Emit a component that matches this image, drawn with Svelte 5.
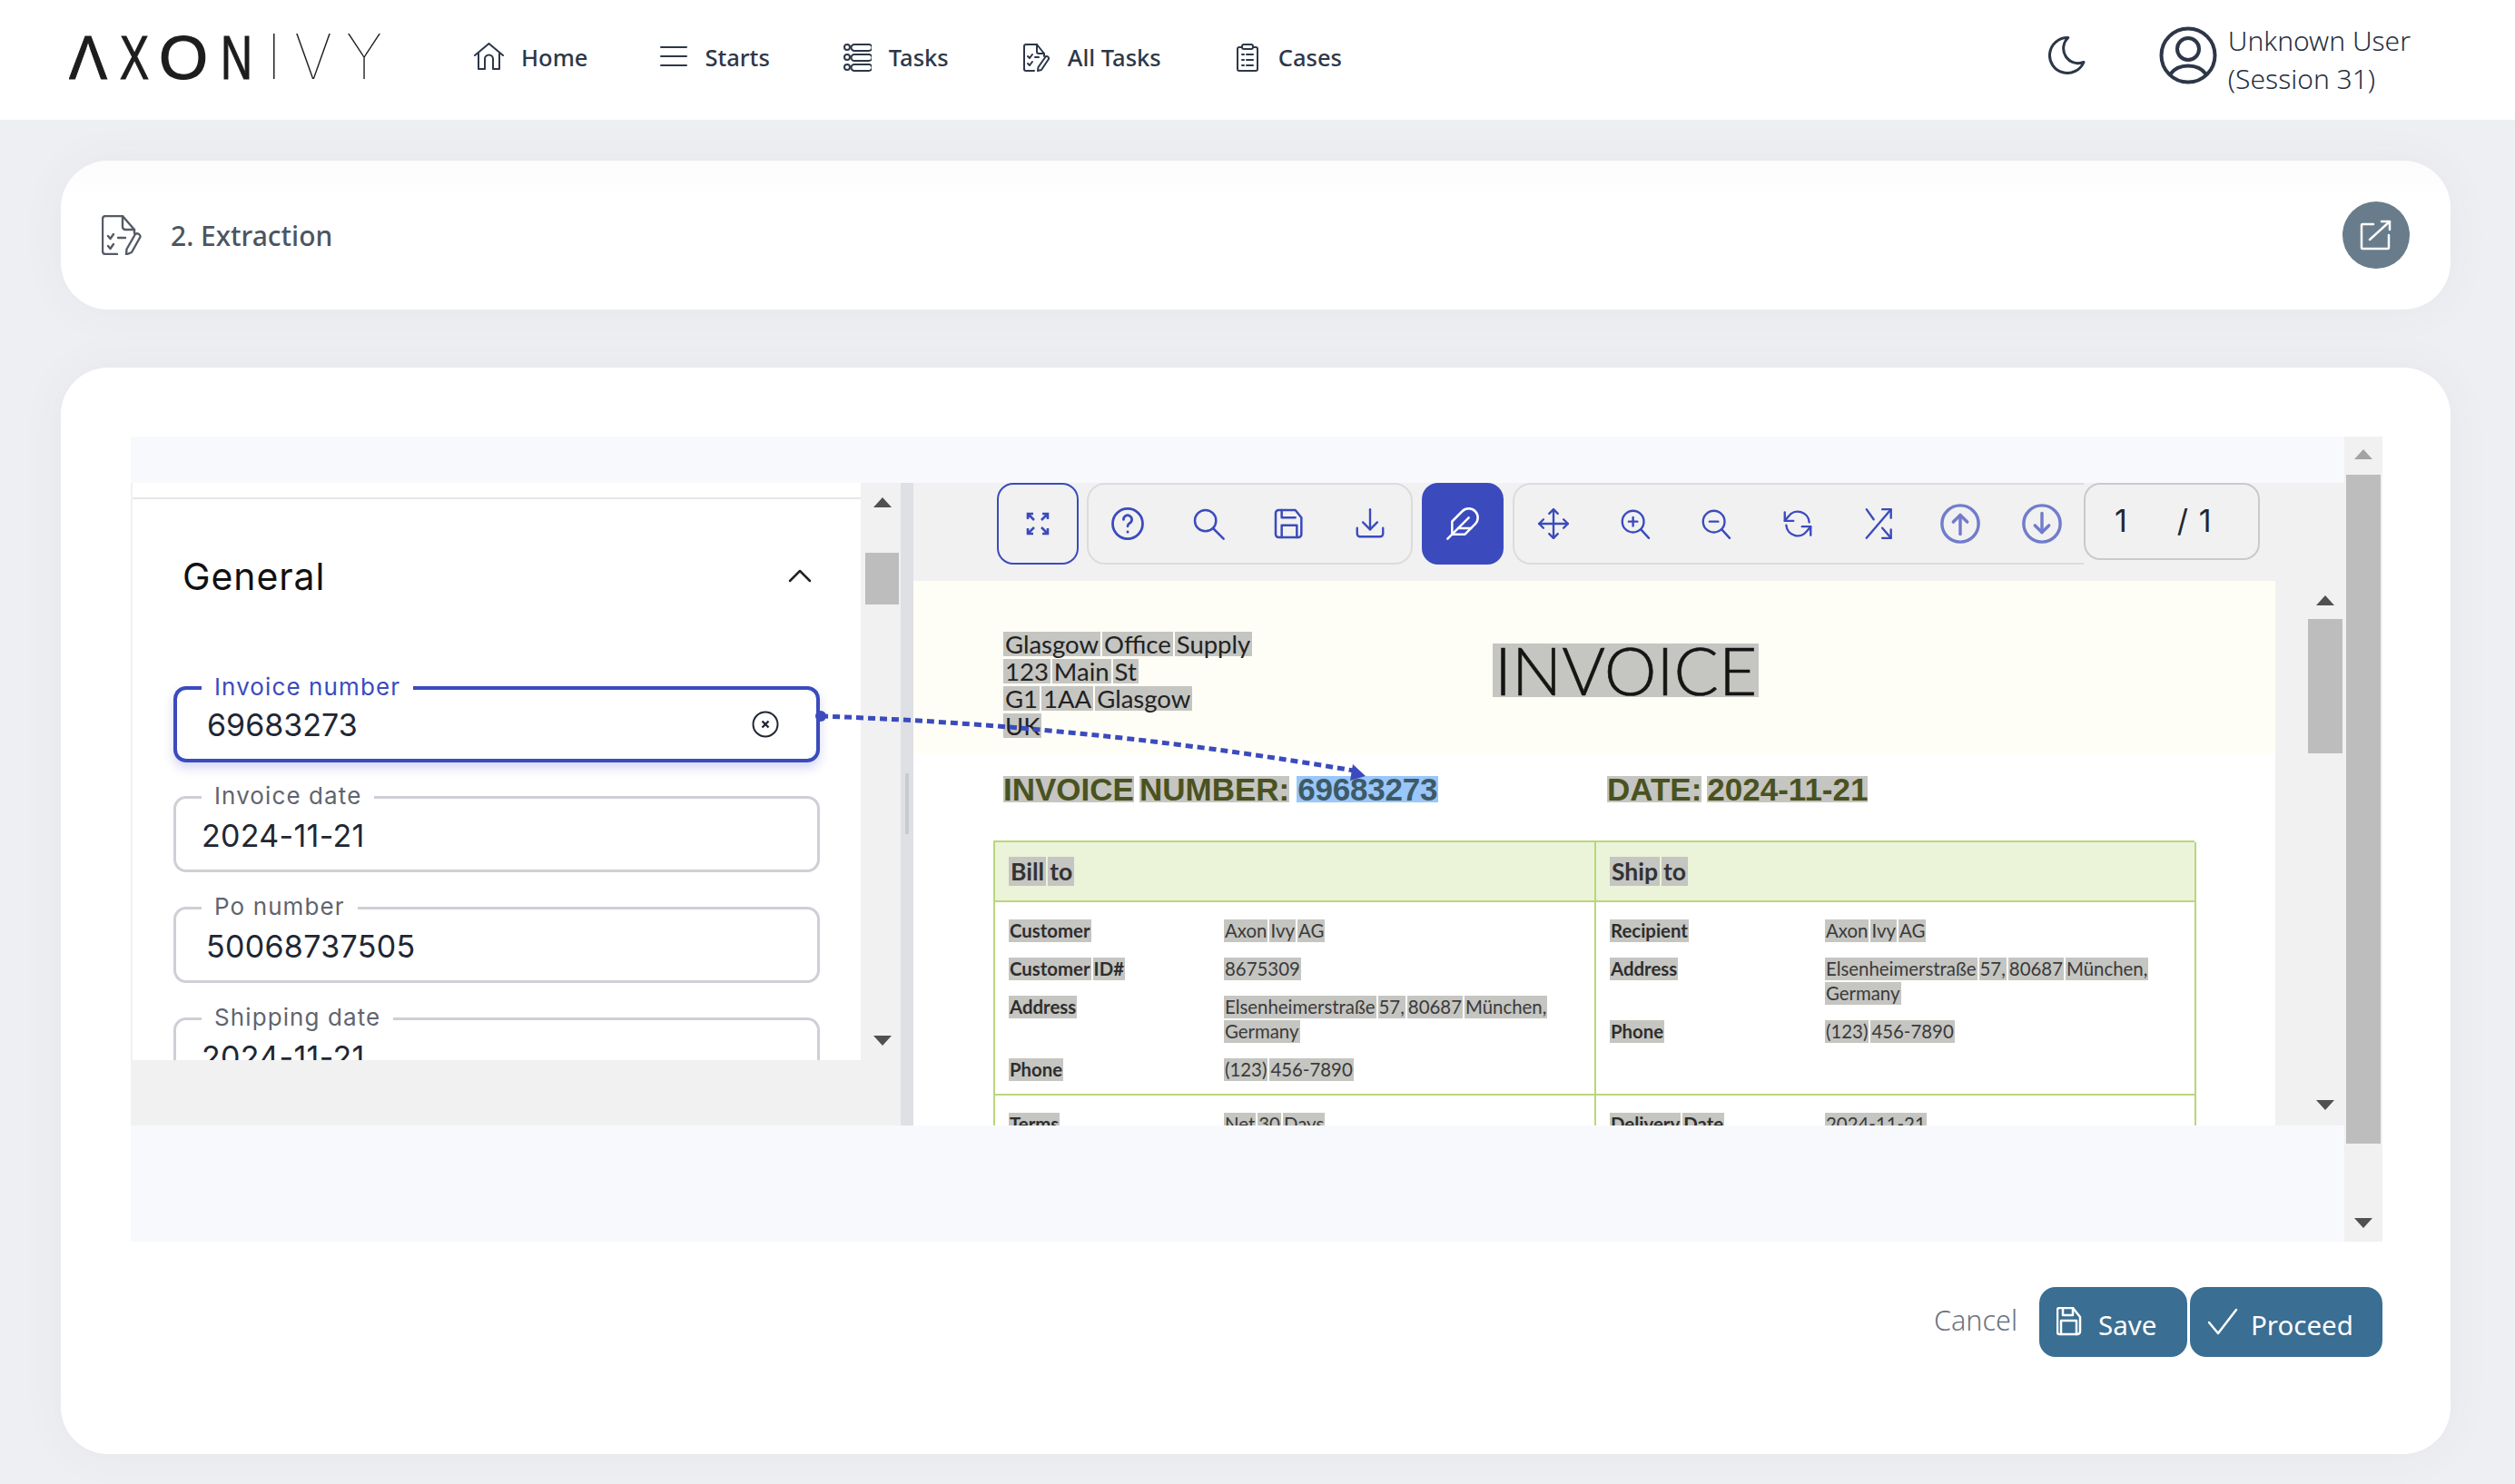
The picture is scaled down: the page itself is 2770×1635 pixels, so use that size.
<script>
  const navItems = [
    { label: "Home", paths: ["M1 14 16.5 1 32 14", "M5 12v17h7V18a4.5 4.5 0 0 1 9 0v11h7V12"], w: 33 },
    { label: "Starts", paths: ["M1 5h28", "M1 15h28", "M1 25h28"], w: 30 },
    {
      label: "Tasks",
      paths: [
        "M2 5a3 3 0 1 0 6 0a3 3 0 1 0-6 0", "M13 2h16a2 2 0 0 1 0 7H13a2 2 0 0 1 0-7z",
        "M2 16a3 3 0 1 0 6 0a3 3 0 1 0-6 0", "M13 13h16a2 2 0 0 1 0 7H13a2 2 0 0 1 0-7z",
        "M2 27a3 3 0 1 0 6 0a3 3 0 1 0-6 0", "M13 24h16a2 2 0 0 1 0 7H13a2 2 0 0 1 0-7z",
      ],
      w: 32,
    },
    {
      label: "All Tasks",
      paths: [
        "M17 2H5a2 2 0 0 0-2 2v25a2 2 0 0 0 2 2h9", "M17 2l8 10h-6a2 2 0 0 1-2-2z", "M25 12v3",
        "M7 15l2 2 3-4", "M7 23l2 2 3-4", "M15 16h4", "M27 15a2.5 2.5 0 0 1 3 3l-8 12-4 1 .5-4z",
      ],
      w: 32,
    },
    {
      label: "Cases",
      paths: [
        "M9 5H6a2 2 0 0 0-2 2v22a2 2 0 0 0 2 2h18a2 2 0 0 0 2-2V7a2 2 0 0 0-2-2h-3",
        "M11 2h8a2 2 0 0 1 2 2v1a2 2 0 0 1-2 2h-8a2 2 0 0 1-2-2V4a2 2 0 0 1 2-2z",
        "M9 13h2", "M14 13h7", "M9 19h2", "M14 19h7", "M9 25h2", "M14 25h7",
      ],
      w: 30,
    },
  ];

  const fileTools = [
    { name: "help", paths: ["M3 12a9 9 0 1 0 18 0a9 9 0 1 0-18 0", "M9.5 9.5a2.5 2.5 0 1 1 3.8 2.1c-.8.5-1.3 1-1.3 1.9", "M12 16.8v.2"], size: 44 },
    { name: "search", paths: ["M3 10a7 7 0 1 0 14 0a7 7 0 1 0-14 0", "M15 15l7 7"], size: 40 },
    { name: "save", paths: ["M5 3h11l4 5v11a2 2 0 0 1-2 2H5a2 2 0 0 1-2-2V5a2 2 0 0 1 2-2z", "M7 3v5h9", "M7 21v-8h10v8"], size: 40 },
    { name: "download", paths: ["M3 15v4a2 2 0 0 0 2 2h14a2 2 0 0 0 2-2v-4", "M12 2v14", "M7 11l5 5 5-5"], size: 38 },
  ];

  const viewTools = [
    { name: "move", paths: ["M12 2v20", "M2 12h20", "M9 5l3-3 3 3", "M9 19l3 3 3-3", "M5 9l-3 3 3 3", "M19 9l3 3-3 3"], size: 38 },
    { name: "zoom in", paths: ["M3 10.5a7.5 7.5 0 1 0 15 0a7.5 7.5 0 1 0-15 0", "M16 16l5.5 6", "M7.5 10.5h6", "M10.5 7.5v6"], size: 38 },
    { name: "zoom out", paths: ["M3 10.5a7.5 7.5 0 1 0 15 0a7.5 7.5 0 1 0-15 0", "M16 16l5.5 6", "M7.5 10.5h6"], size: 38 },
    { name: "rotate", paths: ["M20 11a8 8 0 0 0-14.5-4L3 10", "M3 4v6h6", "M4 13a8 8 0 0 0 14.5 4l2.500-3", "M21 20v-6h-6"], size: 38 },
    { name: "shuffle", paths: ["M3 22L20 2", "M14 2h6v6", "M3 2l5 7", "M14 15l6 7", "M14 22h6v-6"], size: 38 },
  ];

  const pageTools = [
    { name: "previous", paths: ["M1.500 12a10.500 10.500 0 1 0 21 0a10.500 10.500 0 1 0-21 0", "M12 18V7", "M8 11l4-4 4 4"] },
    { name: "next", paths: ["M1.500 12a10.500 10.500 0 1 0 21 0a10.500 10.500 0 1 0-21 0", "M12 6v11", "M8 13l4 4 4-4"] },
  ];

  const fields = [
    { label: "Invoice date", value: "2024-11-21", date: true },
    { label: "Po number", value: "50068737505" },
    { label: "Shipping date", value: "2024-11-21", date: true },
  ];

  const billRows = [
    ["Customer", ["Axon Ivy AG"]],
    ["Customer ID#", ["8675309"]],
    ["Address", ["Elsenheimerstraße 57, 80687 München,", "Germany"]],
    ["Phone", ["(123) 456-7890"]],
  ];
  const shipRows = [
    ["Recipient", ["Axon Ivy AG"]],
    ["Address", ["Elsenheimerstraße 57, 80687 München,", "Germany"]],
    ["Phone", ["(123) 456-7890"]],
  ];
</script>

{#snippet icon(paths, w, h = w, box = `0 0 ${w} ${h}`, cls = "")}
  <svg class={cls} width={w} height={h} viewBox={box} fill="none" stroke="currentColor" stroke-linecap="round" stroke-linejoin="round" aria-hidden="true">
    {#each paths as d}<path {d} />{/each}
  </svg>
{/snippet}

{#snippet words(text)}
  {#each text.split(" ") as word}<span class="word">{word}</span>{/each}
{/snippet}

{#snippet rows(list)}
  <div class="rows">
    {#each list as [label, lines]}
      <div class="row-label">{@render words(label)}</div>
      <div class="row-value">
        {#each lines as line}<div>{@render words(line)}</div>{/each}
      </div>
    {/each}
  </div>
{/snippet}

<div class="page">
  <header class="topbar">
    <svg class="logo" width="345" height="70" viewBox="0 0 345 70" role="img" aria-label="Axon Ivy">
      <text x="0" y="50" textLength="42" lengthAdjust="spacingAndGlyphs" class="logo-bold">Λ</text>
      <text x="56" y="50" textLength="32" lengthAdjust="spacingAndGlyphs" class="logo-bold">X</text>
      <text x="99" y="50" textLength="54" lengthAdjust="spacingAndGlyphs" class="logo-bold">O</text>
      <text x="167" y="50" textLength="35" lengthAdjust="spacingAndGlyphs" class="logo-bold">N</text>
      <rect x="225" y="0" width="1.500" height="50" fill="#222" />
      <text x="248" y="50" textLength="42" lengthAdjust="spacingAndGlyphs" class="logo-thin">V</text>
      <text x="305" y="50" textLength="40" lengthAdjust="spacingAndGlyphs" class="logo-thin">Y</text>
    </svg>

    <nav class="nav">
      {#each navItems as item}
        <a class="nav-item" href="#top">
          {@render icon(item.paths, item.w, 32)}
          <span>{item.label}</span>
        </a>
      {/each}
    </nav>

    <div class="user-area">
      <svg class="moon" width="52" height="52" viewBox="0 0 24 24" fill="none" stroke="currentColor" stroke-width="1.400" stroke-linejoin="round" aria-hidden="true">
        <path d="M12 3c.132 0 .263 0 .393 0a7.500 7.500 0 0 0 7.920 12.446a9 9 0 1 1-8.313-12.454z" />
      </svg>
      <div class="user">
        <svg width="64" height="64" viewBox="0 0 64 64" fill="none" stroke="currentColor" stroke-width="4" aria-hidden="true">
          <circle cx="32" cy="32" r="29.500" />
          <circle cx="32" cy="25" r="12" />
          <path d="M12 53c5-7 12-9.500 20-9.500s15 2.500 20 9.500" />
        </svg>
        <div class="user-name">Unknown User<br />(Session 31)</div>
      </div>
    </div>
  </header>

  <main class="content">
    <section class="card title-card">
      <svg class="title-icon" width="44" height="44" viewBox="0 0 44 44" fill="none" stroke="currentColor" stroke-width="2.400" stroke-linecap="round" stroke-linejoin="round" aria-hidden="true">
        <path d="M23 1H4a3 3 0 0 0-3 3v36a3 3 0 0 0 3 3h13" />
        <path d="M23 1l13 15H26a3 3 0 0 1-3-3z" />
        <path d="M36 16v4" />
        <path d="M7 23l2.500 3 3.500-5" />
        <path d="M7 34l2.500 3 3.500-5" />
        <path d="M18 25h8" />
        <path d="M37 21a3.500 3.500 0 0 1 5.500 3L33 41l-6 2.500.5-6z" />
      </svg>
      <h1>2. Extraction</h1>
      <button class="open-button" aria-label="Open in new tab">
        {@render icon(["M15 5H3a1 1 0 0 0-1 1v25a1 1 0 0 0 1 1h28a1 1 0 0 0 1-1V17", "M11 22L33 2", "M24 2h9v9"], 36, 34)}
      </button>
    </section>

    <section class="card task-card">
      <div class="frame">
        <div class="frame-main">
          <div class="frame-strip"></div>
          <div class="workspace">
            <div class="form-column">
              <div class="form-pane">
                <div class="form-scroll">
                  <div class="form-head">
                    <h2>General</h2>
                    {@render icon(["M2 13L13 2l11 11"], 26, 15, "0 0 26 15", "chevron")}
                  </div>

                  <div class="field focused">
                    <span class="field-label">Invoice number</span>
                    <span class="field-value">69683273</span>
                    <svg class="clear" width="30" height="30" viewBox="0 0 30 30" fill="none" stroke="currentColor" stroke-width="2" aria-hidden="true">
                      <circle cx="15" cy="15" r="13.500" />
                      <path d="M11.500 11.500l7 7M18.500 11.500l-7 7" stroke-width="2.400" />
                    </svg>
                  </div>

                  {#each fields as field}
                    <div class="field">
                      <span class="field-label">{field.label}</span>
                      <span class="field-value" class:date={field.date}>{field.value}</span>
                    </div>
                  {/each}
                </div>
                <div class="scrollbar form-bar">
                  <span class="arrow up"></span>
                  <span class="thumb"></span>
                  <span class="arrow down"></span>
                </div>
              </div>
            </div>

            <div class="splitter"><span></span></div>

            <div class="viewer">
              <div class="toolbar">
                <button class="tool-single" aria-label="Fullscreen">
                  <svg class="expand" width="26" height="26" viewBox="0 0 26 26" fill="none" stroke="currentColor" aria-hidden="true">
                    <path d="M9 9L2 2M2 8V2h6M17 9l7-7M18 2h6v6M9 17l-7 7M2 18v6h6M17 17l7 7M24 18v6h-6" />
                  </svg>
                </button>

                <div class="tool-group file-group">
                  {#each fileTools as t}
                    <span class="tool" title={t.name}>{@render icon(t.paths, t.size, t.size, "0 0 24 24")}</span>
                  {/each}
                </div>

                <button class="tool-active" aria-label="Annotate">
                  {@render icon(["M20.240 12.240a6 6 0 0 0-8.490-8.490L5 10.500V19h8.500z", "M16 8L2 22", "M17.500 15H9"], 40, 40, "0 0 24 24")}
                </button>

                <div class="tool-group view-group">
                  {#each viewTools as t}
                    <span class="tool" title={t.name}>{@render icon(t.paths, t.size, t.size, "0 0 24 24")}</span>
                  {/each}
                  {#each pageTools as t}
                    <span class="tool faded" title={t.name}>{@render icon(t.paths, 46, 46, "0 0 24 24")}</span>
                  {/each}
                </div>

                <div class="page-box">
                  <span class="page-current">1</span>
                  <span class="page-total">/ 1</span>
                </div>
              </div>

              <div class="doc-area">
                <div class="doc">
                  <div class="doc-band">
                    <div class="address">
                      <div>{@render words("Glasgow Office Supply")}</div>
                      <div>{@render words("123 Main St")}</div>
                      <div>{@render words("G1 1AA Glasgow")}</div>
                      <div>{@render words("UK")}</div>
                    </div>
                    <div class="doc-title"><span class="word">INVOICE</span></div>
                  </div>

                  <div class="doc-meta">
                    <div class="meta-number">
                      {@render words("INVOICE NUMBER:")}<span class="word picked">69683273</span>
                    </div>
                    <div class="meta-date">{@render words("DATE: 2024-11-21")}</div>
                  </div>

                  <div class="doc-table">
                    <div class="cell head">{@render words("Bill to")}</div>
                    <div class="cell head">{@render words("Ship to")}</div>
                    <div class="cell body">{@render rows(billRows)}</div>
                    <div class="cell body">{@render rows(shipRows)}</div>
                    <div class="cell body">{@render rows([["Terms", ["Net 30 Days"]]])}</div>
                    <div class="cell body">{@render rows([["Delivery Date", ["2024-11-21"]]])}</div>
                  </div>
                </div>

                <div class="doc-gutter"></div>

                <div class="scrollbar doc-bar">
                  <span class="arrow up"></span>
                  <span class="thumb"></span>
                  <span class="arrow down"></span>
                </div>
              </div>
            </div>
          </div>
          <div class="frame-strip bottom"></div>
        </div>

        <div class="scrollbar frame-bar">
          <span class="arrow up pale"></span>
          <span class="thumb"></span>
          <span class="arrow down"></span>
        </div>
      </div>

      <div class="actions">
        <a class="cancel" href="#top">Cancel</a>
        <button class="action save">
          {@render icon(["M3 1h15l8 10v16a3 3 0 0 1-3 3H3a2 2 0 0 1-2-2V3a2 2 0 0 1 2-2z", "M7 1v8h11V1", "M5 30V15h17v15"], 28, 32, "0 0 28 32")}
          Save
        </button>
        <button class="action proceed">
          {@render icon(["M2 16l10 12L32 2"], 34, 30, "0 0 34 30")}
          Proceed
        </button>
      </div>
    </section>
  </main>

  <!-- connector from the focused field to the value picked in the document -->
  <svg class="connector" width="2770" height="1635" viewBox="0 0 2770 1635" fill="none" aria-hidden="true">
    <circle cx="904" cy="789" r="6" fill="#3b4bbd" />
    <path d="M904 789C1130 797 1320 820 1491 849" stroke="#3b4bbd" stroke-width="5" stroke-dasharray="8 5" />
    <path d="M1490 842l14 13-17 5z" fill="#3b4bbd" />
  </svg>
</div>

<style>
  :global(body) {
    margin: 0;
    background: #eeeff2;
  }

  .page {
    position: relative;
    width: 100%;
    height: 1635px;
    overflow: hidden;
    font-family: "Noto Sans", "Open Sans", sans-serif;
    color: #2d3748;
  }

  .topbar {
    display: flex;
    align-items: center;
    height: 132px;
    padding: 0 115px 6px 76px;
    box-sizing: border-box;
    background: #fff;
  }

  .logo {
    flex: none;
    align-self: flex-start;
    margin-top: 37px;
  }

  .logo text {
    font-family: "Liberation Sans", sans-serif;
    font-size: 69px;
    fill: #1d1d1d;
  }

  .logo .logo-bold {
    stroke: #1d1d1d;
    stroke-width: 1.2px;
  }

  .logo .logo-thin {
    font-family: Inter, sans-serif;
    font-weight: 100;
  }

  .nav {
    display: flex;
    align-items: center;
    gap: 80px;
    margin-left: 101px;
  }

  .nav-item {
    display: flex;
    align-items: center;
    gap: 19px;
    font-size: 25.5px;
    font-weight: 500;
    color: #2d3748;
    text-decoration: none;
  }

  .nav-item svg {
    stroke-width: 2;
  }

  .user-area {
    display: flex;
    align-items: center;
    margin: 0 0 4px auto;
  }

  .moon {
    margin-right: 75px;
  }

  .user {
    display: flex;
    align-items: center;
    gap: 12px;
  }

  .user-name {
    margin-top: 10px;
    font-size: 30px;
    font-weight: 300;
    line-height: 42px;
    white-space: nowrap;
    color: #263040;
  }

  .content {
    padding: 45px 71px 0 67px;
  }

  .card {
    background: #fff;
    border-radius: 52px;
    box-shadow: 0 0 50px rgba(70, 75, 100, 0.05);
  }

  .title-card {
    display: flex;
    align-items: center;
    height: 164px;
    padding: 0 45px;
    box-sizing: border-box;
    background: linear-gradient(#fcfcfc, #fff 30%);
  }

  .title-icon {
    color: #555b66;
  }

  .title-card h1 {
    margin: 0 0 0 32px;
    font-size: 30px;
    font-weight: 500;
    color: #4b5563;
  }

  .open-button {
    display: flex;
    align-items: center;
    justify-content: center;
    width: 74px;
    height: 74px;
    margin-left: auto;
    padding: 0;
    border: none;
    border-radius: 50%;
    background: #687c8b;
    color: #fff;
  }

  .open-button svg {
    stroke-width: 2.500;
  }

  .task-card {
    height: 1197px;
    margin-top: 64px;
    padding: 76px 75px 0 77px;
    box-sizing: border-box;
  }

  .frame {
    display: flex;
    height: 887px;
  }

  .frame-main {
    flex: 1;
    display: flex;
    flex-direction: column;
    min-width: 0;
  }

  .frame-strip {
    flex: none;
    height: 51px;
    background: #f8f9fc;
  }

  .frame-strip.bottom {
    height: 128px;
  }

  .workspace {
    flex: none;
    display: flex;
    height: 708px;
  }

  .form-column {
    flex: none;
    width: 848px;
    box-sizing: border-box;
    padding-left: 2px;
    background: #f1f1f1;
  }

  .form-pane {
    display: flex;
    height: 636px;
    overflow: hidden;
  }

  .form-scroll {
    flex: 1;
    min-width: 0;
    background: #fff;
    position: relative;
    padding: 17px 45px 0 45px;
    box-sizing: border-box;
    font-family: Inter, sans-serif;
  }

  .form-scroll::before {
    content: "";
    position: absolute;
    top: 16px;
    left: 0;
    right: 0;
    height: 2px;
    background: #e6e6e6;
  }

  .form-head {
    display: flex;
    align-items: center;
    justify-content: space-between;
    height: 168px;
    padding: 0 9px 0 10px;
    box-sizing: border-box;
    margin-bottom: 39px;
  }

  .form-head h2 {
    margin: 3px 0 0;
    font-size: 41px;
    font-weight: 400;
    letter-spacing: 0.9px;
    color: #111;
  }

  .chevron {
    stroke-width: 2.500;
    color: #222;
    margin-top: 3px;
  }

  .field {
    position: relative;
    display: flex;
    align-items: center;
    height: 84px;
    margin-bottom: 38px;
    padding-top: 2px;
    box-sizing: border-box;
    border: 3px solid #cfcfd6;
    border-radius: 14px;
  }

  .field.focused {
    border: 4px solid #3b4bbd;
    box-shadow: 0 6px 12px rgba(59, 75, 189, 0.22);
    margin-bottom: 37px;
    padding-top: 1px;
  }

  .field-label {
    position: absolute;
    top: -16px;
    left: 28px;
    padding: 0 14px;
    background: #fff;
    font-size: 26px;
    line-height: 26px;
    letter-spacing: 1.1px;
    color: #5f6570;
    white-space: nowrap;
  }

  .focused .field-label {
    color: #3b4bbd;
    top: -16px;
    left: 27px;
  }

  .field-value {
    margin-left: 33px;
    font-size: 34px;
    letter-spacing: 0.3px;
    color: #1f2733;
  }

  .field-value.date {
    margin-left: 28px;
  }

  .focused .field-value {
    margin-left: 33px;
    letter-spacing: 0;
  }

  .clear {
    position: absolute;
    right: 41px;
    top: 23px;
    color: #1f2733;
  }

  .scrollbar {
    flex: none;
    position: relative;
    background: #f1f1f1;
  }

  .arrow {
    position: absolute;
    left: 50%;
    width: 0;
    height: 0;
    margin-left: -10px;
    border-left: 10px solid transparent;
    border-right: 10px solid transparent;
  }

  .arrow.up {
    border-bottom: 11px solid #505050;
  }

  .arrow.up.pale {
    border-bottom-color: #a3a3a3;
  }

  .arrow.down {
    border-top: 11px solid #505050;
  }

  .thumb {
    position: absolute;
    left: 2px;
    right: 2px;
    background: #bdbdbd;
  }

  .form-bar {
    width: 44px;
  }

  .form-bar .arrow {
    margin-left: -8px;
  }

  .form-bar .up {
    top: 16px;
  }

  .form-bar .thumb {
    top: 77px;
    height: 57px;
    left: 5px;
  }

  .form-bar .down {
    top: 609px;
  }

  .splitter {
    flex: none;
    position: relative;
    width: 14px;
    background: #dee0e5;
  }

  .splitter span {
    position: absolute;
    top: 320px;
    left: 5px;
    width: 4px;
    height: 67px;
    background: #c8cbd0;
  }

  .viewer {
    flex: 1;
    min-width: 0;
    display: flex;
    flex-direction: column;
    background: #f1f1f1;
  }

  .toolbar {
    position: relative;
    display: flex;
    flex: none;
    align-items: flex-start;
    height: 108px;
    padding-left: 92px;
    box-sizing: border-box;
    color: #3b4bbd;
  }

  .toolbar svg {
    stroke-width: 1.500;
  }

  .toolbar .expand {
    stroke-width: 2.600;
  }

  .tool-single,
  .tool-active {
    display: flex;
    align-items: center;
    justify-content: center;
    width: 90px;
    height: 90px;
    padding: 0;
    border-radius: 18px;
    box-sizing: border-box;
  }

  .tool-single {
    border: 2px solid #3b4bbd;
    background: transparent;
    color: #3b4bbd;
  }

  .tool-active {
    margin-left: 10px;
    border: none;
    background: #3b4bbd;
    color: #fff;
  }

  .tool-group {
    display: flex;
    align-items: center;
    height: 90px;
    box-sizing: border-box;
    border: 2px solid #dcdcdc;
    border-radius: 20px;
  }

  .tool-group .tool {
    flex: none;
    display: flex;
    align-items: center;
    justify-content: center;
  }

  .file-group {
    width: 359px;
    margin-left: 9px;
  }

  .file-group .tool {
    width: 89px;
  }

  .file-group .tool:first-child {
    margin-left: -2px;
  }

  .view-group {
    width: 629px;
    margin-left: 10px;
    border-right: none;
    border-radius: 20px 0 0 20px;
  }

  .view-group .tool {
    width: 89.7px;
  }

  .view-group .tool:first-child {
    margin-left: -2px;
  }

  .toolbar .faded {
    opacity: 0.7;
  }

  .toolbar .faded svg {
    stroke-width: 1.800;
  }

  .page-box {
    display: flex;
    align-items: center;
    width: 194px;
    height: 85px;
    box-sizing: border-box;
    border: 2px solid #cacaca;
    border-radius: 18px;
    font-family: Inter, sans-serif;
    font-size: 34px;
    color: #1f2733;
    padding: 0 0 3px 32px;
  }

  .page-total {
    margin-left: 55px;
    word-spacing: 2px;
  }

  .doc-area {
    flex: 1;
    min-height: 0;
    display: flex;
  }

  .doc {
    flex: none;
    width: 1500px;
    overflow: hidden;
    background: #fff;
  }

  .doc-gutter {
    flex: none;
    width: 34px;
  }

  .doc-bar {
    width: 42px;
    height: 600px;
  }

  .doc-bar .up {
    top: 16px;
  }

  .doc-bar .thumb {
    top: 42px;
    height: 148px;
  }

  .doc-bar .down {
    top: 572px;
  }

  .frame-bar {
    width: 42px;
  }

  .frame-bar .up {
    top: 14px;
  }

  .frame-bar .thumb {
    top: 42px;
    height: 737px;
  }

  .frame-bar .down {
    top: 861px;
  }

  .word {
    display: inline-block;
    padding: 0 2px;
    background: #c5c5c1;
  }

  .doc-band {
    display: flex;
    height: 190px;
    padding-left: 99px;
    box-sizing: border-box;
    background: #fffef6;
  }

  .address {
    width: 539px;
    padding-top: 55px;
    box-sizing: border-box;
    font-family: Lato, sans-serif;
    font-size: 27.5px;
    line-height: 30px;
    color: #222;
  }

  .address .word {
    margin-right: 2px;
    line-height: 27px;
  }

  .doc-title {
    padding-top: 69px;
    font-family: Lato, sans-serif;
    font-size: 73px;
    font-weight: 300;
    line-height: 59px;
    color: #151515;
    -webkit-text-stroke: 0.6px #151515;
  }

  .doc-meta {
    display: flex;
    height: 29px;
    margin: 25px 0 0 99px;
    font-family: "Liberation Sans", sans-serif;
    font-size: 35px;
    font-weight: 700;
    line-height: 29px;
    color: #4a5220;
  }

  .doc-meta .word {
    margin-right: 6px;
    padding: 0;
  }

  .meta-number {
    width: 665px;
    white-space: nowrap;
  }

  .word.picked {
    background: #99c6fb;
    color: #3d5a66;
    padding: 0 1px;
    margin-left: 2px;
    letter-spacing: -0.2px;
  }

  .meta-date {
    white-space: nowrap;
  }

  .doc-table {
    display: grid;
    grid-template-columns: 662px 661px;
    grid-template-rows: 66px 213px 80px;
    width: 1323px;
    margin: 42px 0 0 88px;
    font-family: Lato, sans-serif;
    border-top: 2px solid #b9d77b;
    border-left: 2px solid #b9d77b;
    box-sizing: border-box;
  }

  .cell {
    border-right: 2px solid #b9d77b;
    border-bottom: 2px solid #b9d77b;
    box-sizing: border-box;
  }

  .cell.head {
    display: flex;
    align-items: center;
    gap: 2px;
    padding-left: 15px;
    background: #ebf3d9;
    font-size: 26.5px;
    font-weight: 700;
    color: #333;
  }

  .cell.body {
    padding: 18px 0 0 15px;
    font-size: 20.4px;
    line-height: 27px;
    color: #3a3a3a;
  }

  .rows {
    display: grid;
    grid-template-columns: 237px 1fr;
    row-gap: 15px;
  }

  .row-label {
    font-weight: 700;
    color: #2e2e2e;
  }

  .rows .word {
    margin-right: 2px;
    padding: 0 1px;
    line-height: 25px;
  }

  .actions {
    display: flex;
    align-items: flex-start;
    justify-content: flex-end;
    margin-top: 50px;
  }

  .cancel {
    margin: 15px 24px 0 0;
    font-size: 30.5px;
    font-weight: 300;
    color: #6b7280;
    text-decoration: none;
  }

  .action {
    display: flex;
    align-items: center;
    height: 77px;
    padding: 6px 0 0 19px;
    border: none;
    border-radius: 18px;
    background: #3a6e92;
    color: #fff;
    font-family: "Noto Sans", sans-serif;
    font-size: 29.5px;
  }

  .action svg {
    stroke-width: 2.500;
    flex: none;
    margin-top: -8px;
  }

  .save {
    width: 163px;
    gap: 18px;
  }

  .proceed {
    width: 212px;
    margin-left: 3px;
    gap: 14px;
  }

  .connector {
    position: absolute;
    top: 0;
    left: 0;
    pointer-events: none;
  }
</style>
